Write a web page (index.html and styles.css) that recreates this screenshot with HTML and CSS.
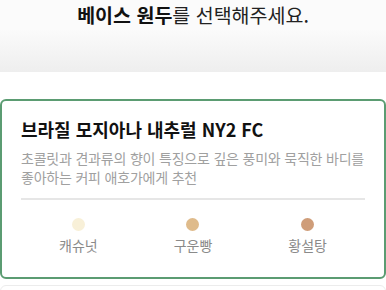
FILE: index.html
```html
<!doctype html>
<html lang="ko">
  <head>
    <meta charset="UTF-8" />
    <meta name="viewport" content="width=device-width, initial-scale=1.0" />
    <title>베이스 원두 선택</title>
    <link rel="stylesheet" href="styles.css">
  </head>
  <body>
    <div class="header">
      <h1><b>베이스 원두</b>를 선택해주세요.</h1>
    </div>
    <div class="list">
      <div class="card selected">
        <h2>브라질 모지아나 내추럴 NY2 FC</h2>
        <p class="desc">초콜릿과 견과류의 향이 특징으로 깊은 풍미와 묵직한 바디를 좋아하는 커피 애호가에게 추천</p>
        <div class="notes">
          <div class="note"><span class="dot cashew"></span><span>캐슈넛</span></div>
          <div class="note"><span class="dot bread"></span><span>구운빵</span></div>
          <div class="note"><span class="dot sugar"></span><span>황설탕</span></div>
        </div>
      </div>
      <div class="card"></div>
    </div>
  </body>
</html>
```

FILE: styles.css
```css
body {
  margin: 0;
  font-family: "Noto Sans CJK KR", "Noto Sans", sans-serif;
  background: #fff;
  color: #111;
  width: 386px;
  height: 290px;
  overflow: hidden;
}
.header {
  height: 72px;
  background: linear-gradient(#fbfbfb 40%, #eeeeee);
  text-align: center;
}
h1 {
  margin: 0;
  padding-top: 5px;
  font-size: 19.5px;
  font-weight: 400;
  line-height: 20px;
  color: #222;
}
h1 b {
  font-weight: 700;
  color: #111;
}
.list {
  padding-top: 27px;
  display: flex;
  flex-direction: column;
  gap: 6px;
}
.card {
  border: 1px solid #ececec;
  border-radius: 6px;
  padding: 0 20px;
  height: 120px;
}
.card.selected {
  border: 2px solid #5b9c72;
  height: auto;
  padding: 15px 19px 22px;
}
h2 {
  margin: 0;
  font-size: 18px;
  font-weight: 700;
  line-height: 26px;
  color: #111;
}
.desc {
  margin: 7px 0 0;
  font-size: 14px;
  line-height: 19px;
  color: #a0a0a0;
  letter-spacing: -0.2px;
}
.notes {
  margin-top: 11px;
  border-top: 2px solid #e6e6e6;
  display: grid;
  grid-template-columns: 1fr 1fr 1fr;
  padding-top: 18px;
}
.note {
  display: flex;
  flex-direction: column;
  align-items: center;
  font-size: 14px;
  line-height: 20px;
  color: #8a8a8a;
}
.dot {
  width: 13px;
  height: 13px;
  border-radius: 50%;
  margin-bottom: 4px;
}
.cashew { background: #f8f0d8; }
.bread { background: #dfbb8b; }
.sugar { background: #cf9d79; }
```
